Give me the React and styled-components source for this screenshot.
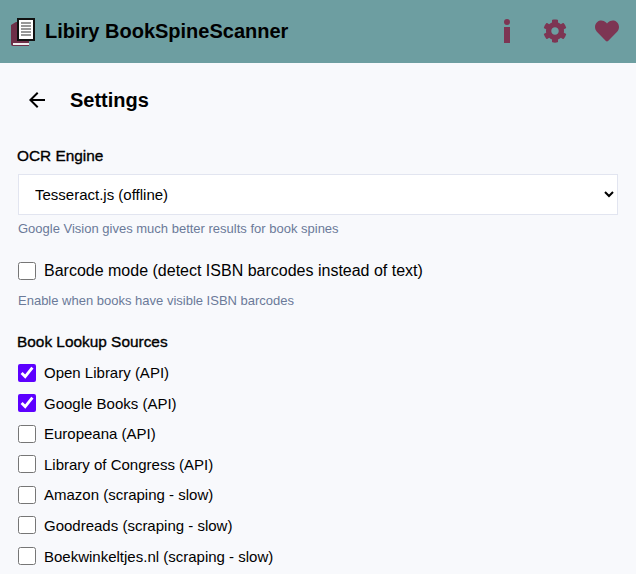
import React from 'react';
import styled, { createGlobalStyle } from 'styled-components';
import { FaCog, FaHeart } from 'react-icons/fa';
import { MdArrowBack } from 'react-icons/md';

const GlobalStyle = createGlobalStyle`
  html, body {
    margin: 0;
    padding: 0;
    height: 574px;
    overflow: hidden;
    background: #f8f9fc;
    font-family: "Liberation Sans", Arial, sans-serif;
    color: #000;
  }
`;

const Header = styled.header`
  height: 63px;
  background: #6d9ea1;
  display: flex;
  align-items: center;
  justify-content: space-between;
  padding: 0 17px 0 11px;
`;

const Brand = styled.div`
  display: flex;
  align-items: center;
  gap: 10px;
`;

const Title = styled.h1`
  margin: 0;
  font-size: 20px;
  font-weight: 700;
`;

const IconRow = styled.div`
  display: flex;
  align-items: center;
  margin-top: -1px;
  color: #7d3553;
  font-size: 24px;
`;

const IconSlot = styled.span`
  width: 24px;
  height: 24px;
  margin-left: ${p => p.$gap || 0}px;
  display: flex;
  align-items: center;
  justify-content: center;
`;

const Content = styled.main`
  padding: 0 18px;
`;

const TopBar = styled.div`
  height: 74px;
  display: flex;
  align-items: center;
  gap: 21px;
  padding-left: 7px;
`;

const BackIcon = styled(MdArrowBack)`
  font-size: 24px;
  display: block;
`;

const PageTitle = styled.h2`
  margin: 0;
  font-size: 20px;
  font-weight: 700;
`;

const SectionLabel = styled.label`
  display: block;
  margin-top: ${p => p.$top}px;
  margin-left: -1px;
  font-size: 15.4px;
  font-weight: 400;
  -webkit-text-stroke: 0.35px #000;
  line-height: 16px;
`;

const Select = styled.select`
  display: block;
  width: 100%;
  height: 41px;
  margin-top: 10px;
  padding: 0 12px;
  background: #fff;
  border: 1px solid #e2e5f0;
  border-radius: 0;
  font-family: inherit;
  font-size: 15px;
  color: #000;
`;

const Hint = styled.p`
  margin: ${p => p.$top}px 0 0;
  font-size: 13px;
  line-height: 15px;
  color: #6b7a99;
`;

const CheckRow = styled.label`
  display: flex;
  align-items: center;
  gap: 8px;
  height: 18px;
  font-size: ${p => (p.$large ? 16 : 15)}px;
  margin-top: ${p => p.$top}px;
`;

const Check = styled.input.attrs({ type: 'checkbox' })`
  width: 18px;
  height: 18px;
  margin: 0;
  accent-color: #5d00ff;
`;

function BookLogo() {
  return (
    <svg width="24" height="28" viewBox="0 0 24 28">
      <path d="M0 7 L5 4 H18 V28 H2 Q0 28 0 26 Z" fill="#6e2f48" />
      <rect x="2" y="25" width="16" height="2" fill="#f3eef0" />
      <rect x="7" y="1" width="16" height="21" fill="#fff" stroke="#111" strokeWidth="2" />
      <path d="M10 5h10M10 8h10M10 11h10M10 14h10M10 17h10" stroke="#777" strokeWidth="1.5" />
    </svg>
  );
}

function InfoGlyph() {
  return (
    <svg width="24" height="24" viewBox="0 0 24 24" fill="currentColor">
      <circle cx="12" cy="3" r="3" />
      <path d="M9 8h6v16H9z" />
    </svg>
  );
}

const sources = [
  ['Open Library (API)', true],
  ['Google Books (API)', true],
  ['Europeana (API)', false],
  ['Library of Congress (API)', false],
  ['Amazon (scraping - slow)', false],
  ['Goodreads (scraping - slow)', false],
  ['Boekwinkeltjes.nl (scraping - slow)', false],
];

export default function App() {
  return (
    <>
      <GlobalStyle />
      <Header>
        <Brand>
          <BookLogo />
          <Title>Libiry BookSpineScanner</Title>
        </Brand>
        <IconRow>
          <IconSlot><InfoGlyph /></IconSlot>
          <IconSlot $gap={24}><FaCog /></IconSlot>
          <IconSlot $gap={28}><FaHeart /></IconSlot>
        </IconRow>
      </Header>
      <Content>
        <TopBar>
          <BackIcon />
          <PageTitle>Settings</PageTitle>
        </TopBar>
        <SectionLabel $top={11}>OCR Engine</SectionLabel>
        <Select defaultValue="tesseract">
          <option value="tesseract">Tesseract.js (offline)</option>
          <option value="vision">Google Vision</option>
        </Select>
        <Hint $top={6}>Google Vision gives much better results for book spines</Hint>
        <CheckRow $large $top={26}>
          <Check />
          Barcode mode (detect ISBN barcodes instead of text)
        </CheckRow>
        <Hint $top={13}>Enable when books have visible ISBN barcodes</Hint>
        <SectionLabel $top={26}>Book Lookup Sources</SectionLabel>
        {sources.map(([name, checked], i) => (
          <CheckRow key={name} $top={i === 0 ? 13.5 : 12.6}>
            <Check defaultChecked={checked} />
            {name}
          </CheckRow>
        ))}
      </Content>
    </>
  );
}
